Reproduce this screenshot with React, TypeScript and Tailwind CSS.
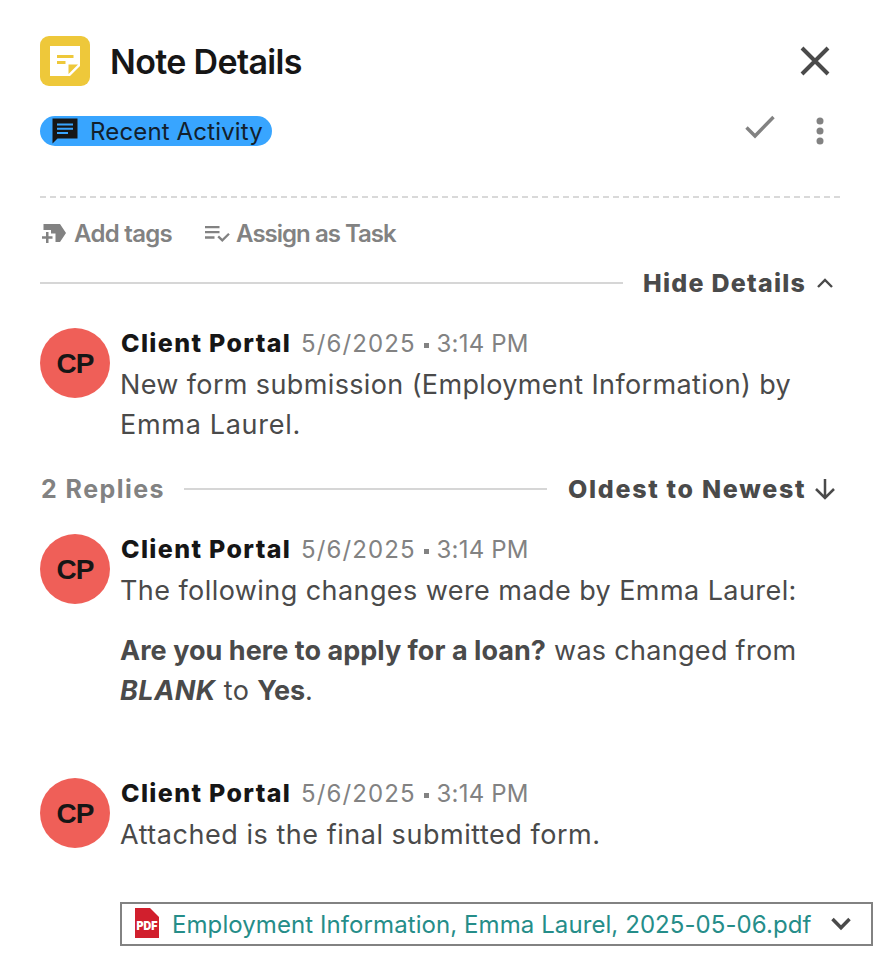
import { ReactNode } from "react";

type EntryType = {
  id: number;
  author: string;
  initials: string;
  time: string;
};

const entries: EntryType[] = [
  { id: 1, author: "Client Portal", initials: "CP", time: "3:14 PM" },
  { id: 2, author: "Client Portal", initials: "CP", time: "3:14 PM" },
  { id: 3, author: "Client Portal", initials: "CP", time: "3:14 PM" },
];

function NoteIcon() {
  return (
    <div className="flex size-[50px] items-center justify-center rounded-[9px] bg-[#eec83a]">
      <svg width="30" height="30" viewBox="0 0 30 30">
        <path d="M0 0H30V20L20 30H0Z" fill="#fff" />
        <path d="M7 9H23.5V12H7ZM7 15H15.5V18H7ZM18.5 18.5H28L18.5 28Z" fill="#eec83a" />
      </svg>
    </div>
  );
}

function Header() {
  return (
    <div className="flex h-[50px] items-center">
      <NoteIcon />
      <h1 className="mt-[2px] ml-5 text-[34px] leading-[50px] font-semibold tracking-[-0.65px] text-[#161616]">
        Note Details
      </h1>
      <button className="mr-[10px] ml-auto">
        <svg width="30" height="30" viewBox="0 0 30 30" fill="none" stroke="#4a4a4a" strokeWidth="4">
          <path d="M2 2L28 28M28 2L2 28" />
        </svg>
      </button>
    </div>
  );
}

function Toolbar() {
  return (
    <div className="mt-[30px] flex h-[30px] items-center">
      <div className="flex h-[30px] w-[232px] items-center rounded-full bg-[#38a5ff] pl-[10px] text-[#12202c]">
        <svg className="ml-[2px]" width="26" height="26" viewBox="0 0 26 26">
          <path d="M0.5 0.5H25.5V20.5H5.5L0.5 25.5Z" fill="#161616" />
          <path d="M5 6.5H21M5 10.8H21M5 15H16" stroke="#38a5ff" strokeWidth="2" />
        </svg>
        <span className="mt-[2px] ml-[12px] text-[24px] leading-[30px] tracking-[0.15px] whitespace-nowrap">
          Recent Activity
        </span>
      </div>
      <button className="-mt-[9px] ml-auto">
        <svg width="30" height="24" viewBox="0 0 30 24" fill="none" stroke="#828282" strokeWidth="3.4">
          <path d="M1.5 12.5L10 21L28.5 2" />
        </svg>
      </button>
      <button className="mr-4 ml-[41px]">
        <svg width="8" height="28" viewBox="0 0 8 28" fill="#828282">
          <circle cx="4" cy="4" r="3.5" />
          <circle cx="4" cy="14" r="3.5" />
          <circle cx="4" cy="24" r="3.5" />
        </svg>
      </button>
    </div>
  );
}

function Actions() {
  return (
    <div className="mt-[20px] flex h-8 items-center text-[24px] leading-8 font-semibold text-[#828282]">
      <svg className="ml-[2px]" width="25" height="20" viewBox="0 0 25 20" fill="#828282">
        <path d="M1.5 0H18L24 9L18 18H13.5V9.5H9V6H1.5Z" />
        <path d="M0 12.2H4V8H6.5V12.2H10.5V14.7H6.5V19H4V14.7H0Z" />
      </svg>
      <span className="ml-[7px] tracking-[-0.7px]">Add tags</span>
      <svg className="ml-[33px]" width="25" height="18" viewBox="0 0 25 18" fill="none" stroke="#828282" strokeWidth="2.3">
        <path d="M0 2.2H14.5M0 7.2H14.5M0 12.5H9.5M13.2 11.4L17.3 15.4L24 8.7" />
      </svg>
      <span className="ml-[6px] tracking-[-0.98px]">Assign as Task</span>
    </div>
  );
}

function Divider() {
  return <div className="h-[2px] flex-1 bg-[#d6d6d6]" />;
}

function Entry(props: { entry: EntryType; children: ReactNode }) {
  const { entry, children } = props;

  return (
    <div className="flex">
      <div className="flex size-[70px] shrink-0 items-center justify-center rounded-full bg-[#ef5f58] pt-px font-['Liberation_Sans',Arial,sans-serif] text-[28px] font-bold tracking-[-1px] text-[#161616]">
        {entry.initials}
      </div>
      <div className="ml-[10px] flex-1">
        <div className="flex h-[32px] items-center text-[24px] leading-[30px] whitespace-nowrap">
          <span className="-mt-[3px] w-[181px] pl-px text-[25px] font-extrabold tracking-[1.35px] text-[#161616]">
            {entry.author}
          </span>
          <span className="tracking-[1.1px] text-[#828282]">5/6/2025</span>
          <span className="mt-[2px] mr-[8px] ml-[8px] size-[5px] bg-[#828282]" />
          <span className="tracking-[0.2px] text-[#828282]">{entry.time}</span>
        </div>
        <div className="mt-[5px] text-[27px] leading-10 tracking-[0.4px] whitespace-nowrap text-[#4a4a4a]">
          {children}
        </div>
      </div>
    </div>
  );
}

function Attachment() {
  return (
    <div className="mt-[47px] -mr-[33px] ml-20 flex h-11 items-center border-2 border-[#828282] pl-[13px]">
      <svg className="-mt-[2px]" width="24" height="30" viewBox="0 0 24 30">
        <path d="M0 0H15L24 9V30H0Z" fill="#d11f2d" />
        <text x="1.5" y="22" fill="#fff" fontSize="12" fontWeight="900" fontFamily="Inter, sans-serif" textLength="21" lengthAdjust="spacingAndGlyphs">
          PDF
        </text>
      </svg>
      <span className="mt-[2px] ml-[13px] text-[24px] leading-10 tracking-[0.08px] whitespace-nowrap text-[#258d89]">
        Employment Information, Emma Laurel, 2025-05-06.pdf
      </span>
      <svg className="mr-5 ml-auto" width="20" height="14" viewBox="0 0 20 14" fill="none" stroke="#4a4a4a" strokeWidth="3.5">
        <path d="M1.5 2L10 10.7L18.5 2" />
      </svg>
    </div>
  );
}

export default function App() {
  return (
    <div className="h-[976px] w-[874px] overflow-hidden bg-white pt-9 pr-[34px] pl-10 font-['Inter','Liberation_Sans',sans-serif]">
      <Header />
      <Toolbar />
      <div className="mt-[50px] h-[2px] bg-[repeating-linear-gradient(90deg,#d9d9d9_0_6px,transparent_6px_10.05px)]" />
      <Actions />

      <div className="mt-[18px] flex h-[30px] items-center text-[25px] leading-[30px] font-extrabold text-[#4a4a4a]">
        <Divider />
        <span className="-mt-px ml-5 w-[174px] tracking-[1.25px] whitespace-nowrap">Hide Details</span>
        <svg className="mr-[7px]" width="16" height="10" viewBox="0 0 16 10" fill="none" stroke="#4a4a4a" strokeWidth="2.4">
          <path d="M1 9L8 2L15 9" />
        </svg>
      </div>

      <div className="mt-[30px] h-[146px]">
        <Entry entry={entries[0]}>
          <p className="tracking-[0.37px]">New form submission (Employment Information) by</p>
          <p className="tracking-[0.7px]">Emma Laurel.</p>
        </Entry>
      </div>

      <div className="flex h-[30px] items-center text-[25px] leading-[30px] whitespace-nowrap">
        <span className="-mt-px w-36 pl-px font-bold tracking-[1.45px] text-[#828282]">2 Replies</span>
        <Divider />
        <span className="-mt-px ml-[21px] w-[246px] font-extrabold tracking-[1.7px] text-[#4a4a4a]">
          Oldest to Newest
        </span>
        <svg className="mr-1" width="22" height="22" viewBox="0 0 22 22" fill="none" stroke="#4a4a4a" strokeWidth="2.5">
          <path d="M11 1V20M2 11L11 20L20 11" />
        </svg>
      </div>

      <div className="mt-[30px] h-[244px]">
        <Entry entry={entries[1]}>
          <p className="tracking-[0.43px]">The following changes were made by Emma Laurel:</p>
          <p className="mt-5">
            <b className="tracking-[0.04px]">Are you here to apply for a loan?</b>{" "}
            <span className="tracking-[0.3px]">was changed from</span>
          </p>
          <p>
            <b className="tracking-[0.5px] italic">BLANK</b> to <b className="tracking-[-0.1px]">Yes</b>.
          </p>
        </Entry>
      </div>

      <Entry entry={entries[2]}>
        <p className="tracking-[0.53px]">Attached is the final submitted form.</p>
      </Entry>
      <Attachment />
    </div>
  );
}
